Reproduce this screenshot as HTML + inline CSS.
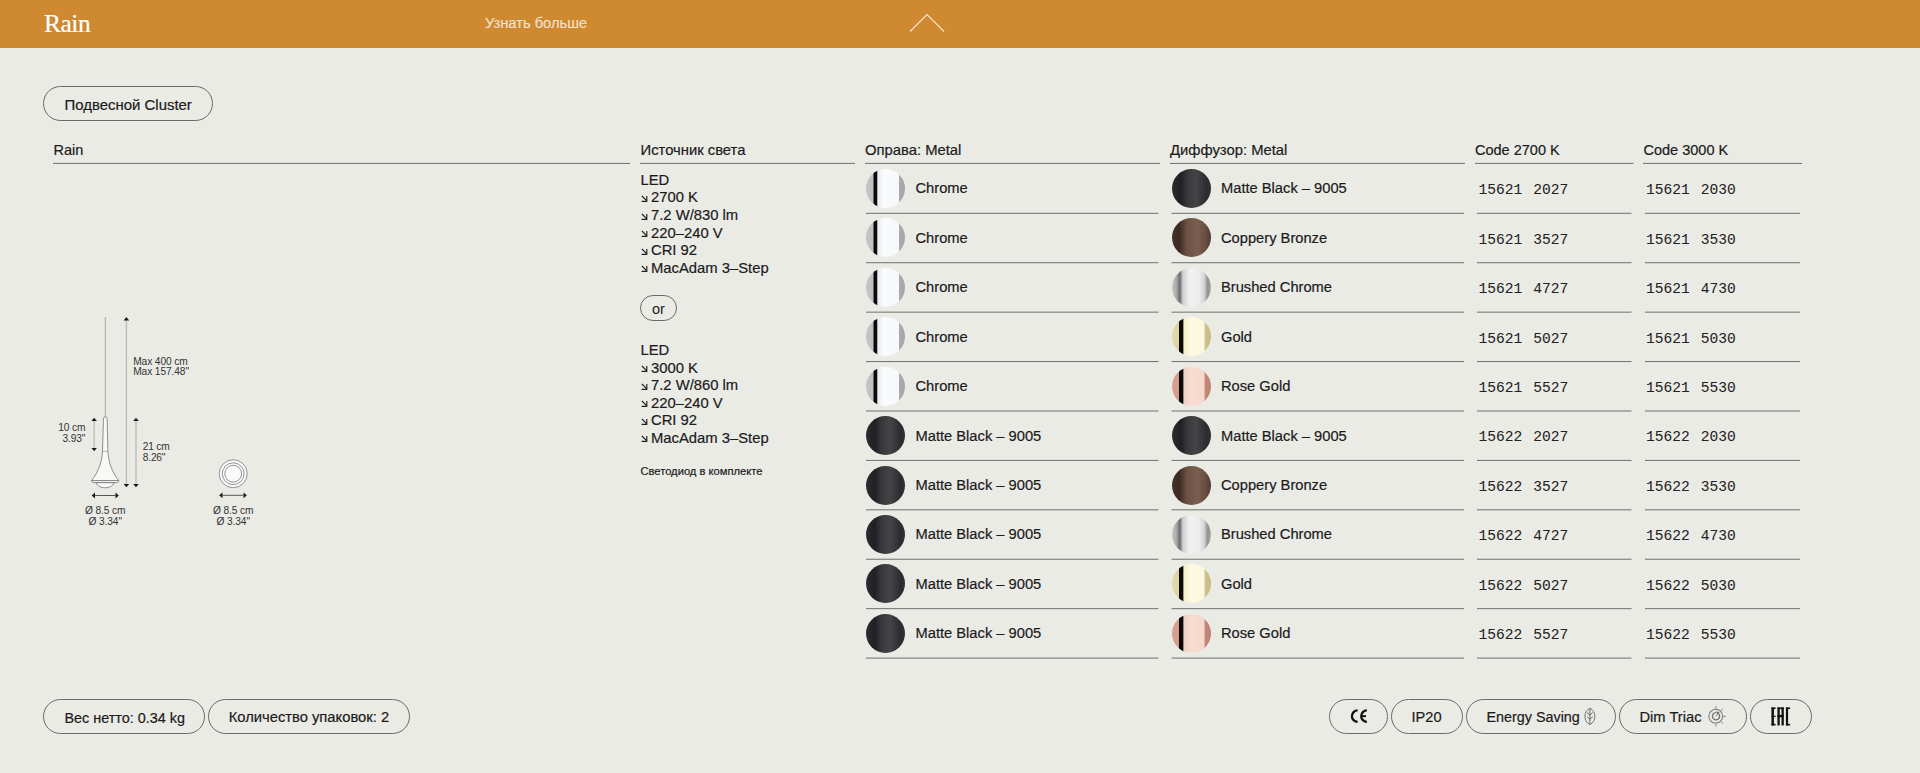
<!DOCTYPE html>
<html><head><meta charset="utf-8"><title>Rain</title>
<style>
html,body{margin:0;padding:0}
body{width:1920px;height:773px;overflow:hidden;background:#EBEBE6;position:relative;font-family:"Liberation Sans",sans-serif;color:#1b1b1b}
#hdr{position:absolute;left:0;top:0;width:1920px;height:48px;background:#CF8A31}
.t{position:absolute;white-space:nowrap;-webkit-text-stroke:0.2px currentColor}
.abs{position:absolute;overflow:visible}
.ln{position:absolute}
.pill{position:absolute;box-sizing:border-box;border:1px solid #6a6a6a;border-radius:18px}
.arw{display:inline-block;width:10.5px;height:7px;vertical-align:0.3px}
.sw{position:absolute;width:39px;height:39px;border-radius:50%}
.chrome{background:linear-gradient(90deg,#c3c4c7 0%,#c0c1c4 18.5%,#0a0a0a 20%,#0a0a0a 28%,#e9eaed 30%,#fafbfd 45%,#f7f8fa 83.5%,#a9abaf 85.5%,#a3a5a9 100%)}
.black{background:linear-gradient(90deg,#2c2d30 0%,#1f2023 22%,#38393b 40%,#444446 62%,#2a2b2e 90%,#333436 100%)}
.bronze{background:linear-gradient(90deg,#4a3328 0%,#3a2820 18%,#6b5245 38%,#7a5e50 65%,#6a4f42 85%,#503a30 100%)}
.brushed{background:linear-gradient(90deg,#c8c8c8 0%,#a8a8a8 12%,#6a6a6a 20%,#d0d0d0 28%,#f2f2f2 45%,#ebebeb 70%,#d6d6d6 82%,#8e8e8e 92%,#b0b0b0 100%)}
.gold{background:linear-gradient(90deg,#e3d8a8 0%,#e0d4a2 17%,#0c0a05 19%,#0c0a05 27%,#f6f0c8 31%,#fcfae2 50%,#fbf8df 82%,#cdc08d 85%,#c7ba85 100%)}
.rose{background:linear-gradient(90deg,#d8a090 0%,#d59c8c 17%,#0c0707 19%,#0c0707 27%,#f1cfc3 31%,#f9ddd2 50%,#f6d8cd 82%,#c38878 85%,#bd8273 100%)}
</style></head><body>
<div id="hdr"></div>
<div class="t " style="left:44.00px;top:10.64px;font-size:25.5px;line-height:25.5px;font-family:'Liberation Serif', serif;color:#fff;letter-spacing:-0.5px">Rain</div>
<div class="t " style="left:485.00px;top:15.56px;font-size:14.7px;line-height:14.7px;font-family:'Liberation Sans', sans-serif;color:rgba(255,255,255,0.72)">Узнать больше</div>
<svg class="abs" style="left:905px;top:8px" width="45" height="30" viewBox="905 8 45 30"><polyline points="910,31.5 927,14.5 944,31.5" fill="none" stroke="#f6e6cf" stroke-width="1.1"/></svg>
<div class="pill" style="left:43.00px;top:86.40px;width:170.00px;height:34.60px;"></div>
<div class="t " style="left:64.50px;top:97.84px;font-size:14.95px;line-height:14.95px;font-family:'Liberation Sans', sans-serif;">Подвесной Cluster</div>
<div class="t " style="left:53.50px;top:143.03px;font-size:14.5px;line-height:14.5px;font-family:'Liberation Sans', sans-serif;">Rain</div>
<div class="t " style="left:640.50px;top:142.77px;font-size:14.8px;line-height:14.8px;font-family:'Liberation Sans', sans-serif;">Источник света</div>
<div class="t " style="left:865.00px;top:142.77px;font-size:14.8px;line-height:14.8px;font-family:'Liberation Sans', sans-serif;">Оправа: Metal</div>
<div class="t " style="left:1170.00px;top:142.77px;font-size:14.8px;line-height:14.8px;font-family:'Liberation Sans', sans-serif;">Диффузор: Metal</div>
<div class="t " style="left:1475.00px;top:143.03px;font-size:14.5px;line-height:14.5px;font-family:'Liberation Sans', sans-serif;">Code 2700 K</div>
<div class="t " style="left:1643.50px;top:143.03px;font-size:14.5px;line-height:14.5px;font-family:'Liberation Sans', sans-serif;">Code 3000 K</div>
<div class="sw chrome" style="left:866px;top:169.00px"></div>
<div class="t " style="left:915.50px;top:181.46px;font-size:14.7px;line-height:14.7px;font-family:'Liberation Sans', sans-serif;">Chrome</div>
<div class="sw black" style="left:1171.5px;top:169.00px"></div>
<div class="t " style="left:1221.00px;top:181.46px;font-size:14.7px;line-height:14.7px;font-family:'Liberation Sans', sans-serif;">Matte Black – 9005</div>
<div class="t " style="left:1478.50px;top:183.31px;font-size:14.6px;line-height:14.6px;font-family:'Liberation Mono', monospace;word-spacing:2.2px;-webkit-text-stroke:0.05px currentColor;color:#222">15621 2027</div>
<div class="t " style="left:1646.00px;top:183.31px;font-size:14.6px;line-height:14.6px;font-family:'Liberation Mono', monospace;word-spacing:2.2px;-webkit-text-stroke:0.05px currentColor;color:#222">15621 2030</div>
<div class="sw chrome" style="left:866px;top:218.42px"></div>
<div class="t " style="left:915.50px;top:230.88px;font-size:14.7px;line-height:14.7px;font-family:'Liberation Sans', sans-serif;">Chrome</div>
<div class="sw bronze" style="left:1171.5px;top:218.42px"></div>
<div class="t " style="left:1221.00px;top:230.88px;font-size:14.7px;line-height:14.7px;font-family:'Liberation Sans', sans-serif;">Coppery Bronze</div>
<div class="t " style="left:1478.50px;top:232.73px;font-size:14.6px;line-height:14.6px;font-family:'Liberation Mono', monospace;word-spacing:2.2px;-webkit-text-stroke:0.05px currentColor;color:#222">15621 3527</div>
<div class="t " style="left:1646.00px;top:232.73px;font-size:14.6px;line-height:14.6px;font-family:'Liberation Mono', monospace;word-spacing:2.2px;-webkit-text-stroke:0.05px currentColor;color:#222">15621 3530</div>
<div class="sw chrome" style="left:866px;top:267.84px"></div>
<div class="t " style="left:915.50px;top:280.30px;font-size:14.7px;line-height:14.7px;font-family:'Liberation Sans', sans-serif;">Chrome</div>
<div class="sw brushed" style="left:1171.5px;top:267.84px"></div>
<div class="t " style="left:1221.00px;top:280.30px;font-size:14.7px;line-height:14.7px;font-family:'Liberation Sans', sans-serif;">Brushed Chrome</div>
<div class="t " style="left:1478.50px;top:282.15px;font-size:14.6px;line-height:14.6px;font-family:'Liberation Mono', monospace;word-spacing:2.2px;-webkit-text-stroke:0.05px currentColor;color:#222">15621 4727</div>
<div class="t " style="left:1646.00px;top:282.15px;font-size:14.6px;line-height:14.6px;font-family:'Liberation Mono', monospace;word-spacing:2.2px;-webkit-text-stroke:0.05px currentColor;color:#222">15621 4730</div>
<div class="sw chrome" style="left:866px;top:317.26px"></div>
<div class="t " style="left:915.50px;top:329.72px;font-size:14.7px;line-height:14.7px;font-family:'Liberation Sans', sans-serif;">Chrome</div>
<div class="sw gold" style="left:1171.5px;top:317.26px"></div>
<div class="t " style="left:1221.00px;top:329.72px;font-size:14.7px;line-height:14.7px;font-family:'Liberation Sans', sans-serif;">Gold</div>
<div class="t " style="left:1478.50px;top:331.57px;font-size:14.6px;line-height:14.6px;font-family:'Liberation Mono', monospace;word-spacing:2.2px;-webkit-text-stroke:0.05px currentColor;color:#222">15621 5027</div>
<div class="t " style="left:1646.00px;top:331.57px;font-size:14.6px;line-height:14.6px;font-family:'Liberation Mono', monospace;word-spacing:2.2px;-webkit-text-stroke:0.05px currentColor;color:#222">15621 5030</div>
<div class="sw chrome" style="left:866px;top:366.68px"></div>
<div class="t " style="left:915.50px;top:379.14px;font-size:14.7px;line-height:14.7px;font-family:'Liberation Sans', sans-serif;">Chrome</div>
<div class="sw rose" style="left:1171.5px;top:366.68px"></div>
<div class="t " style="left:1221.00px;top:379.14px;font-size:14.7px;line-height:14.7px;font-family:'Liberation Sans', sans-serif;">Rose Gold</div>
<div class="t " style="left:1478.50px;top:380.99px;font-size:14.6px;line-height:14.6px;font-family:'Liberation Mono', monospace;word-spacing:2.2px;-webkit-text-stroke:0.05px currentColor;color:#222">15621 5527</div>
<div class="t " style="left:1646.00px;top:380.99px;font-size:14.6px;line-height:14.6px;font-family:'Liberation Mono', monospace;word-spacing:2.2px;-webkit-text-stroke:0.05px currentColor;color:#222">15621 5530</div>
<div class="sw black" style="left:866px;top:416.10px"></div>
<div class="t " style="left:915.50px;top:428.56px;font-size:14.7px;line-height:14.7px;font-family:'Liberation Sans', sans-serif;">Matte Black – 9005</div>
<div class="sw black" style="left:1171.5px;top:416.10px"></div>
<div class="t " style="left:1221.00px;top:428.56px;font-size:14.7px;line-height:14.7px;font-family:'Liberation Sans', sans-serif;">Matte Black – 9005</div>
<div class="t " style="left:1478.50px;top:430.41px;font-size:14.6px;line-height:14.6px;font-family:'Liberation Mono', monospace;word-spacing:2.2px;-webkit-text-stroke:0.05px currentColor;color:#222">15622 2027</div>
<div class="t " style="left:1646.00px;top:430.41px;font-size:14.6px;line-height:14.6px;font-family:'Liberation Mono', monospace;word-spacing:2.2px;-webkit-text-stroke:0.05px currentColor;color:#222">15622 2030</div>
<div class="sw black" style="left:866px;top:465.52px"></div>
<div class="t " style="left:915.50px;top:477.98px;font-size:14.7px;line-height:14.7px;font-family:'Liberation Sans', sans-serif;">Matte Black – 9005</div>
<div class="sw bronze" style="left:1171.5px;top:465.52px"></div>
<div class="t " style="left:1221.00px;top:477.98px;font-size:14.7px;line-height:14.7px;font-family:'Liberation Sans', sans-serif;">Coppery Bronze</div>
<div class="t " style="left:1478.50px;top:479.83px;font-size:14.6px;line-height:14.6px;font-family:'Liberation Mono', monospace;word-spacing:2.2px;-webkit-text-stroke:0.05px currentColor;color:#222">15622 3527</div>
<div class="t " style="left:1646.00px;top:479.83px;font-size:14.6px;line-height:14.6px;font-family:'Liberation Mono', monospace;word-spacing:2.2px;-webkit-text-stroke:0.05px currentColor;color:#222">15622 3530</div>
<div class="sw black" style="left:866px;top:514.94px"></div>
<div class="t " style="left:915.50px;top:527.40px;font-size:14.7px;line-height:14.7px;font-family:'Liberation Sans', sans-serif;">Matte Black – 9005</div>
<div class="sw brushed" style="left:1171.5px;top:514.94px"></div>
<div class="t " style="left:1221.00px;top:527.40px;font-size:14.7px;line-height:14.7px;font-family:'Liberation Sans', sans-serif;">Brushed Chrome</div>
<div class="t " style="left:1478.50px;top:529.25px;font-size:14.6px;line-height:14.6px;font-family:'Liberation Mono', monospace;word-spacing:2.2px;-webkit-text-stroke:0.05px currentColor;color:#222">15622 4727</div>
<div class="t " style="left:1646.00px;top:529.25px;font-size:14.6px;line-height:14.6px;font-family:'Liberation Mono', monospace;word-spacing:2.2px;-webkit-text-stroke:0.05px currentColor;color:#222">15622 4730</div>
<div class="sw black" style="left:866px;top:564.36px"></div>
<div class="t " style="left:915.50px;top:576.82px;font-size:14.7px;line-height:14.7px;font-family:'Liberation Sans', sans-serif;">Matte Black – 9005</div>
<div class="sw gold" style="left:1171.5px;top:564.36px"></div>
<div class="t " style="left:1221.00px;top:576.82px;font-size:14.7px;line-height:14.7px;font-family:'Liberation Sans', sans-serif;">Gold</div>
<div class="t " style="left:1478.50px;top:578.67px;font-size:14.6px;line-height:14.6px;font-family:'Liberation Mono', monospace;word-spacing:2.2px;-webkit-text-stroke:0.05px currentColor;color:#222">15622 5027</div>
<div class="t " style="left:1646.00px;top:578.67px;font-size:14.6px;line-height:14.6px;font-family:'Liberation Mono', monospace;word-spacing:2.2px;-webkit-text-stroke:0.05px currentColor;color:#222">15622 5030</div>
<div class="sw black" style="left:866px;top:613.78px"></div>
<div class="t " style="left:915.50px;top:626.24px;font-size:14.7px;line-height:14.7px;font-family:'Liberation Sans', sans-serif;">Matte Black – 9005</div>
<div class="sw rose" style="left:1171.5px;top:613.78px"></div>
<div class="t " style="left:1221.00px;top:626.24px;font-size:14.7px;line-height:14.7px;font-family:'Liberation Sans', sans-serif;">Rose Gold</div>
<div class="t " style="left:1478.50px;top:628.09px;font-size:14.6px;line-height:14.6px;font-family:'Liberation Mono', monospace;word-spacing:2.2px;-webkit-text-stroke:0.05px currentColor;color:#222">15622 5527</div>
<div class="t " style="left:1646.00px;top:628.09px;font-size:14.6px;line-height:14.6px;font-family:'Liberation Mono', monospace;word-spacing:2.2px;-webkit-text-stroke:0.05px currentColor;color:#222">15622 5530</div>
<svg class="abs" style="left:0;top:0" width="1920" height="773" viewBox="0 0 1920 773"><rect x="53.00" y="162.90" width="577.00" height="1" fill="#6f6f6f"/><rect x="640.00" y="162.90" width="215.00" height="1" fill="#6f6f6f"/><rect x="865.00" y="162.90" width="295.00" height="1" fill="#6f6f6f"/><rect x="1170.00" y="162.90" width="295.00" height="1" fill="#6f6f6f"/><rect x="1475.00" y="162.90" width="158.50" height="1" fill="#6f6f6f"/><rect x="1643.00" y="162.90" width="159.00" height="1" fill="#6f6f6f"/><rect x="866.00" y="212.80" width="292.50" height="1" fill="#6f6f6f"/><rect x="1171.50" y="212.80" width="292.50" height="1" fill="#6f6f6f"/><rect x="1477.00" y="212.80" width="154.50" height="1" fill="#6f6f6f"/><rect x="1645.00" y="212.80" width="155.00" height="1" fill="#6f6f6f"/><rect x="866.00" y="262.22" width="292.50" height="1" fill="#6f6f6f"/><rect x="1171.50" y="262.22" width="292.50" height="1" fill="#6f6f6f"/><rect x="1477.00" y="262.22" width="154.50" height="1" fill="#6f6f6f"/><rect x="1645.00" y="262.22" width="155.00" height="1" fill="#6f6f6f"/><rect x="866.00" y="311.64" width="292.50" height="1" fill="#6f6f6f"/><rect x="1171.50" y="311.64" width="292.50" height="1" fill="#6f6f6f"/><rect x="1477.00" y="311.64" width="154.50" height="1" fill="#6f6f6f"/><rect x="1645.00" y="311.64" width="155.00" height="1" fill="#6f6f6f"/><rect x="866.00" y="361.06" width="292.50" height="1" fill="#6f6f6f"/><rect x="1171.50" y="361.06" width="292.50" height="1" fill="#6f6f6f"/><rect x="1477.00" y="361.06" width="154.50" height="1" fill="#6f6f6f"/><rect x="1645.00" y="361.06" width="155.00" height="1" fill="#6f6f6f"/><rect x="866.00" y="410.48" width="292.50" height="1" fill="#6f6f6f"/><rect x="1171.50" y="410.48" width="292.50" height="1" fill="#6f6f6f"/><rect x="1477.00" y="410.48" width="154.50" height="1" fill="#6f6f6f"/><rect x="1645.00" y="410.48" width="155.00" height="1" fill="#6f6f6f"/><rect x="866.00" y="459.90" width="292.50" height="1" fill="#6f6f6f"/><rect x="1171.50" y="459.90" width="292.50" height="1" fill="#6f6f6f"/><rect x="1477.00" y="459.90" width="154.50" height="1" fill="#6f6f6f"/><rect x="1645.00" y="459.90" width="155.00" height="1" fill="#6f6f6f"/><rect x="866.00" y="509.32" width="292.50" height="1" fill="#6f6f6f"/><rect x="1171.50" y="509.32" width="292.50" height="1" fill="#6f6f6f"/><rect x="1477.00" y="509.32" width="154.50" height="1" fill="#6f6f6f"/><rect x="1645.00" y="509.32" width="155.00" height="1" fill="#6f6f6f"/><rect x="866.00" y="558.74" width="292.50" height="1" fill="#6f6f6f"/><rect x="1171.50" y="558.74" width="292.50" height="1" fill="#6f6f6f"/><rect x="1477.00" y="558.74" width="154.50" height="1" fill="#6f6f6f"/><rect x="1645.00" y="558.74" width="155.00" height="1" fill="#6f6f6f"/><rect x="866.00" y="608.16" width="292.50" height="1" fill="#6f6f6f"/><rect x="1171.50" y="608.16" width="292.50" height="1" fill="#6f6f6f"/><rect x="1477.00" y="608.16" width="154.50" height="1" fill="#6f6f6f"/><rect x="1645.00" y="608.16" width="155.00" height="1" fill="#6f6f6f"/><rect x="866.00" y="657.58" width="292.50" height="1" fill="#6f6f6f"/><rect x="1171.50" y="657.58" width="292.50" height="1" fill="#6f6f6f"/><rect x="1477.00" y="657.58" width="154.50" height="1" fill="#6f6f6f"/><rect x="1645.00" y="657.58" width="155.00" height="1" fill="#6f6f6f"/></svg>
<div class="t " style="left:640.50px;top:172.87px;font-size:14.8px;line-height:14.8px;font-family:'Liberation Sans', sans-serif;">LED</div>
<div class="t " style="left:640.50px;top:190.42px;font-size:14.8px;line-height:14.8px;font-family:'Liberation Sans', sans-serif;"><svg class="arw" width="10.5" height="7" viewBox="0 0 10.5 7"><path d="M0.9,1 L5.6,5.7 M5.8,1.1 L5.8,6.3 L0.6,6.3" fill="none" stroke="#222" stroke-width="1.15"/></svg>2700 K</div>
<div class="t " style="left:640.50px;top:207.97px;font-size:14.8px;line-height:14.8px;font-family:'Liberation Sans', sans-serif;"><svg class="arw" width="10.5" height="7" viewBox="0 0 10.5 7"><path d="M0.9,1 L5.6,5.7 M5.8,1.1 L5.8,6.3 L0.6,6.3" fill="none" stroke="#222" stroke-width="1.15"/></svg>7.2 W/830 lm</div>
<div class="t " style="left:640.50px;top:225.52px;font-size:14.8px;line-height:14.8px;font-family:'Liberation Sans', sans-serif;"><svg class="arw" width="10.5" height="7" viewBox="0 0 10.5 7"><path d="M0.9,1 L5.6,5.7 M5.8,1.1 L5.8,6.3 L0.6,6.3" fill="none" stroke="#222" stroke-width="1.15"/></svg>220–240 V</div>
<div class="t " style="left:640.50px;top:243.07px;font-size:14.8px;line-height:14.8px;font-family:'Liberation Sans', sans-serif;"><svg class="arw" width="10.5" height="7" viewBox="0 0 10.5 7"><path d="M0.9,1 L5.6,5.7 M5.8,1.1 L5.8,6.3 L0.6,6.3" fill="none" stroke="#222" stroke-width="1.15"/></svg>CRI 92</div>
<div class="t " style="left:640.50px;top:260.62px;font-size:14.8px;line-height:14.8px;font-family:'Liberation Sans', sans-serif;"><svg class="arw" width="10.5" height="7" viewBox="0 0 10.5 7"><path d="M0.9,1 L5.6,5.7 M5.8,1.1 L5.8,6.3 L0.6,6.3" fill="none" stroke="#222" stroke-width="1.15"/></svg>MacAdam 3–Step</div>
<div class="pill" style="left:640.00px;top:295.00px;width:37.00px;height:26.30px;"><span style="position:absolute;left:0;right:0;top:5.6px;text-align:center;font-size:14.5px;line-height:15px">or</span></div>
<div class="t " style="left:640.50px;top:342.97px;font-size:14.8px;line-height:14.8px;font-family:'Liberation Sans', sans-serif;">LED</div>
<div class="t " style="left:640.50px;top:360.52px;font-size:14.8px;line-height:14.8px;font-family:'Liberation Sans', sans-serif;"><svg class="arw" width="10.5" height="7" viewBox="0 0 10.5 7"><path d="M0.9,1 L5.6,5.7 M5.8,1.1 L5.8,6.3 L0.6,6.3" fill="none" stroke="#222" stroke-width="1.15"/></svg>3000 K</div>
<div class="t " style="left:640.50px;top:378.07px;font-size:14.8px;line-height:14.8px;font-family:'Liberation Sans', sans-serif;"><svg class="arw" width="10.5" height="7" viewBox="0 0 10.5 7"><path d="M0.9,1 L5.6,5.7 M5.8,1.1 L5.8,6.3 L0.6,6.3" fill="none" stroke="#222" stroke-width="1.15"/></svg>7.2 W/860 lm</div>
<div class="t " style="left:640.50px;top:395.62px;font-size:14.8px;line-height:14.8px;font-family:'Liberation Sans', sans-serif;"><svg class="arw" width="10.5" height="7" viewBox="0 0 10.5 7"><path d="M0.9,1 L5.6,5.7 M5.8,1.1 L5.8,6.3 L0.6,6.3" fill="none" stroke="#222" stroke-width="1.15"/></svg>220–240 V</div>
<div class="t " style="left:640.50px;top:413.17px;font-size:14.8px;line-height:14.8px;font-family:'Liberation Sans', sans-serif;"><svg class="arw" width="10.5" height="7" viewBox="0 0 10.5 7"><path d="M0.9,1 L5.6,5.7 M5.8,1.1 L5.8,6.3 L0.6,6.3" fill="none" stroke="#222" stroke-width="1.15"/></svg>CRI 92</div>
<div class="t " style="left:640.50px;top:430.72px;font-size:14.8px;line-height:14.8px;font-family:'Liberation Sans', sans-serif;"><svg class="arw" width="10.5" height="7" viewBox="0 0 10.5 7"><path d="M0.9,1 L5.6,5.7 M5.8,1.1 L5.8,6.3 L0.6,6.3" fill="none" stroke="#222" stroke-width="1.15"/></svg>MacAdam 3–Step</div>
<div class="t " style="left:640.40px;top:465.82px;font-size:11.2px;line-height:11.2px;font-family:'Liberation Sans', sans-serif;">Светодиод в комплекте</div>
<svg class="abs" style="left:0;top:300px" width="300" height="240" viewBox="0 300 300 240">
<g fill="none" stroke="#a5a5a5" stroke-width="1">
<line x1="105.25" y1="317" x2="105.25" y2="417"/>
</g>
<g fill="#f8f8f7" stroke="#6e6e6e" stroke-width="0.75">
<path d="M103.5,418.2 Q103.6,416.9 105.3,416.9 Q107,416.9 107.1,418.2 L107.9,451 C108.3,462 112,472 118.8,480.6 L91.6,480.6 C98.4,472 102.1,462 102.5,451 Z"/>
<path d="M95.8,482.6 C97.6,486.3 101,487.8 105.1,487.8 C109.2,487.8 112.6,486.3 114.4,482.6 Z"/>
<path d="M91.4,480.6 L118.9,480.6 L117.4,482.6 L92.9,482.6 Z"/>
<line x1="102.4" y1="451.3" x2="108" y2="451.3" stroke="#9a9a9a"/>
</g>
<g stroke="#b9b9b7" stroke-width="1.3" fill="#1a1a1a">
<line x1="126.4" y1="320" x2="126.4" y2="484"/>
<line x1="136" y1="421" x2="136" y2="484"/>
<line x1="94.15" y1="421" x2="94.15" y2="448"/>
</g>
<g stroke="#555" stroke-width="1" fill="#1a1a1a">
<line x1="95" y1="495.5" x2="115.5" y2="495.5"/>
<line x1="222.5" y1="495.3" x2="243.5" y2="495.3"/>
</g>
<g fill="#1a1a1a">
<path d="M123.6,320.5 L129.2,320.5 L126.4,317 Z"/>
<path d="M123.6,484 L129.2,484 L126.4,487.3 Z"/>
<path d="M133.2,421 L138.8,421 L136,417.7 Z"/>
<path d="M133.2,484 L138.8,484 L136,487.3 Z"/>
<path d="M91.4,421 L96.9,421 L94.15,417.8 Z"/>
<path d="M91.4,448 L96.9,448 L94.15,451.2 Z"/>
<path d="M95,492.6 L95,498.4 L91.7,495.5 Z"/>
<path d="M115.5,492.6 L115.5,498.4 L118.8,495.5 Z"/>
<path d="M222.5,492.4 L222.5,498.2 L219.2,495.3 Z"/>
<path d="M243.5,492.4 L243.5,498.2 L246.8,495.3 Z"/>
</g>
<g fill="#fafafa" stroke="#777" stroke-width="0.8">
<circle cx="233.2" cy="473.7" r="14"/>
<circle cx="233.2" cy="473.7" r="10.9"/>
<circle cx="233.2" cy="473.7" r="8.4"/>
</g>
</svg>
<div class="t " style="left:133.20px;top:356.77px;font-size:10.2px;line-height:10.2px;font-family:'Liberation Sans', sans-serif;letter-spacing:-0.1px;color:#333;-webkit-text-stroke:0">Max 400 cm</div>
<div class="t " style="left:133.20px;top:367.37px;font-size:10.2px;line-height:10.2px;font-family:'Liberation Sans', sans-serif;letter-spacing:-0.1px;color:#333;-webkit-text-stroke:0">Max 157.48"</div>
<div class="t" style="left:40px;width:45.4px;text-align:right;top:423.10px;font-size:10.2px;line-height:10.2px;letter-spacing:-0.1px;color:#333;-webkit-text-stroke:0">10 cm<br><span style="display:inline-block;margin-top:0.6px">3.93"</span></div>
<div class="t " style="left:142.80px;top:441.57px;font-size:10.2px;line-height:10.2px;font-family:'Liberation Sans', sans-serif;letter-spacing:-0.2px;color:#333;-webkit-text-stroke:0">21 cm</div>
<div class="t " style="left:142.80px;top:452.57px;font-size:10.2px;line-height:10.2px;font-family:'Liberation Sans', sans-serif;letter-spacing:-0.2px;color:#333;-webkit-text-stroke:0">8.26"</div>
<div class="t" style="left:75.20px;width:60px;text-align:center;top:504.70px;font-size:10.2px;line-height:11.2px;letter-spacing:-0.1px;color:#333;-webkit-text-stroke:0">Ø 8.5 cm<br>Ø 3.34"</div>
<div class="t" style="left:203.20px;width:60px;text-align:center;top:504.70px;font-size:10.2px;line-height:11.2px;letter-spacing:-0.1px;color:#333;-webkit-text-stroke:0">Ø 8.5 cm<br>Ø 3.34"</div>
<div class="pill" style="left:43.00px;top:699.00px;width:162.00px;height:34.60px;"></div>
<div class="t " style="left:64.50px;top:710.61px;font-size:14.4px;line-height:14.4px;font-family:'Liberation Sans', sans-serif;">Вес нетто: 0.34 kg</div>
<div class="pill" style="left:207.50px;top:699.00px;width:202.50px;height:34.60px;"></div>
<div class="t " style="left:228.70px;top:710.31px;font-size:14.75px;line-height:14.75px;font-family:'Liberation Sans', sans-serif;">Количество упаковок: 2</div>
<div class="pill" style="left:1329.00px;top:699.00px;width:59.00px;height:34.50px;"></div>
<div class="pill" style="left:1391.00px;top:699.00px;width:72.00px;height:34.50px;"></div>
<div class="t " style="left:1411.50px;top:710.14px;font-size:14.6px;line-height:14.6px;font-family:'Liberation Sans', sans-serif;">IP20</div>
<div class="pill" style="left:1466.00px;top:699.00px;width:150.00px;height:34.50px;"></div>
<div class="t " style="left:1486.50px;top:710.35px;font-size:14.35px;line-height:14.35px;font-family:'Liberation Sans', sans-serif;">Energy Saving</div>
<div class="pill" style="left:1619.00px;top:699.00px;width:127.50px;height:34.50px;"></div>
<div class="t " style="left:1639.50px;top:710.06px;font-size:14.7px;line-height:14.7px;font-family:'Liberation Sans', sans-serif;">Dim Triac</div>
<div class="pill" style="left:1750.00px;top:699.00px;width:61.50px;height:34.50px;"></div>
<svg class="abs" style="left:0;top:0" width="1920" height="773" viewBox="0 0 1920 773">
<path d="M1357.6,710.45 A5.7,5.7 0 0 0 1357.6,721.85" fill="none" stroke="#111" stroke-width="2.3"/>
<path d="M1366.9,710.45 A5.7,5.7 0 0 0 1366.9,721.85" fill="none" stroke="#111" stroke-width="2.3"/>
<line x1="1361" y1="716.15" x2="1366" y2="716.15" stroke="#111" stroke-width="2"/>
<path d="M1589.9,708.2 A9.27,9.27 0 0 1 1589.9,724.6 A9.27,9.27 0 0 1 1589.9,708.2 Z" fill="none" stroke="#6a6a6a" stroke-width="0.95"/>
<path d="M1589.9,709 L1589.9,724 M1587.1,712.6 L1589.9,715 L1592.7,712.6 M1587.1,716.8 L1589.9,719.2 L1592.7,716.8" fill="none" stroke="#6a6a6a" stroke-width="1"/>
<circle cx="1715.75" cy="716.15" r="6.9" fill="none" stroke="#7a7a7a" stroke-width="1.1"/>
<path d="M1718.3,713.4 A3.6,3.6 0 1 1 1716.2,712.6" fill="none" stroke="#707070" stroke-width="1.3"/>
<path d="M1715.9,711.2 L1719.6,712.2 L1717.6,714.6 Z" fill="#707070"/>
<line x1="1715.75" y1="716.15" x2="1717.6" y2="714.2" stroke="#777" stroke-width="1"/>
<path d="M1715.9,706 L1715.9,709 M1715.9,723.3 L1715.9,726.5 M1722.8,716.3 L1726,716.3 M1720.7,711 L1723,708.8 M1720.7,721.3 L1723,723.5" stroke="#8a8a8a" stroke-width="1"/>
<g fill="#111">
<rect x="1771.45" y="707.45" width="2.5" height="18"/><rect x="1771.45" y="707.45" width="4.15" height="1.6"/><rect x="1771.45" y="715.7" width="4.15" height="1.4"/><rect x="1771.45" y="723.85" width="4.15" height="1.6"/>
<rect x="1777.45" y="707.45" width="2.3" height="18"/><rect x="1781.5" y="707.45" width="2.3" height="18"/><rect x="1777.45" y="707.45" width="6.35" height="1.6"/><rect x="1777.45" y="714.9" width="6.35" height="2.4"/>
<rect x="1785.9" y="707.45" width="2.2" height="18"/><rect x="1785.9" y="707.45" width="4.2" height="1.6"/><rect x="1785.9" y="723.85" width="4.2" height="1.6"/>
</g>
</svg>
</body></html>
